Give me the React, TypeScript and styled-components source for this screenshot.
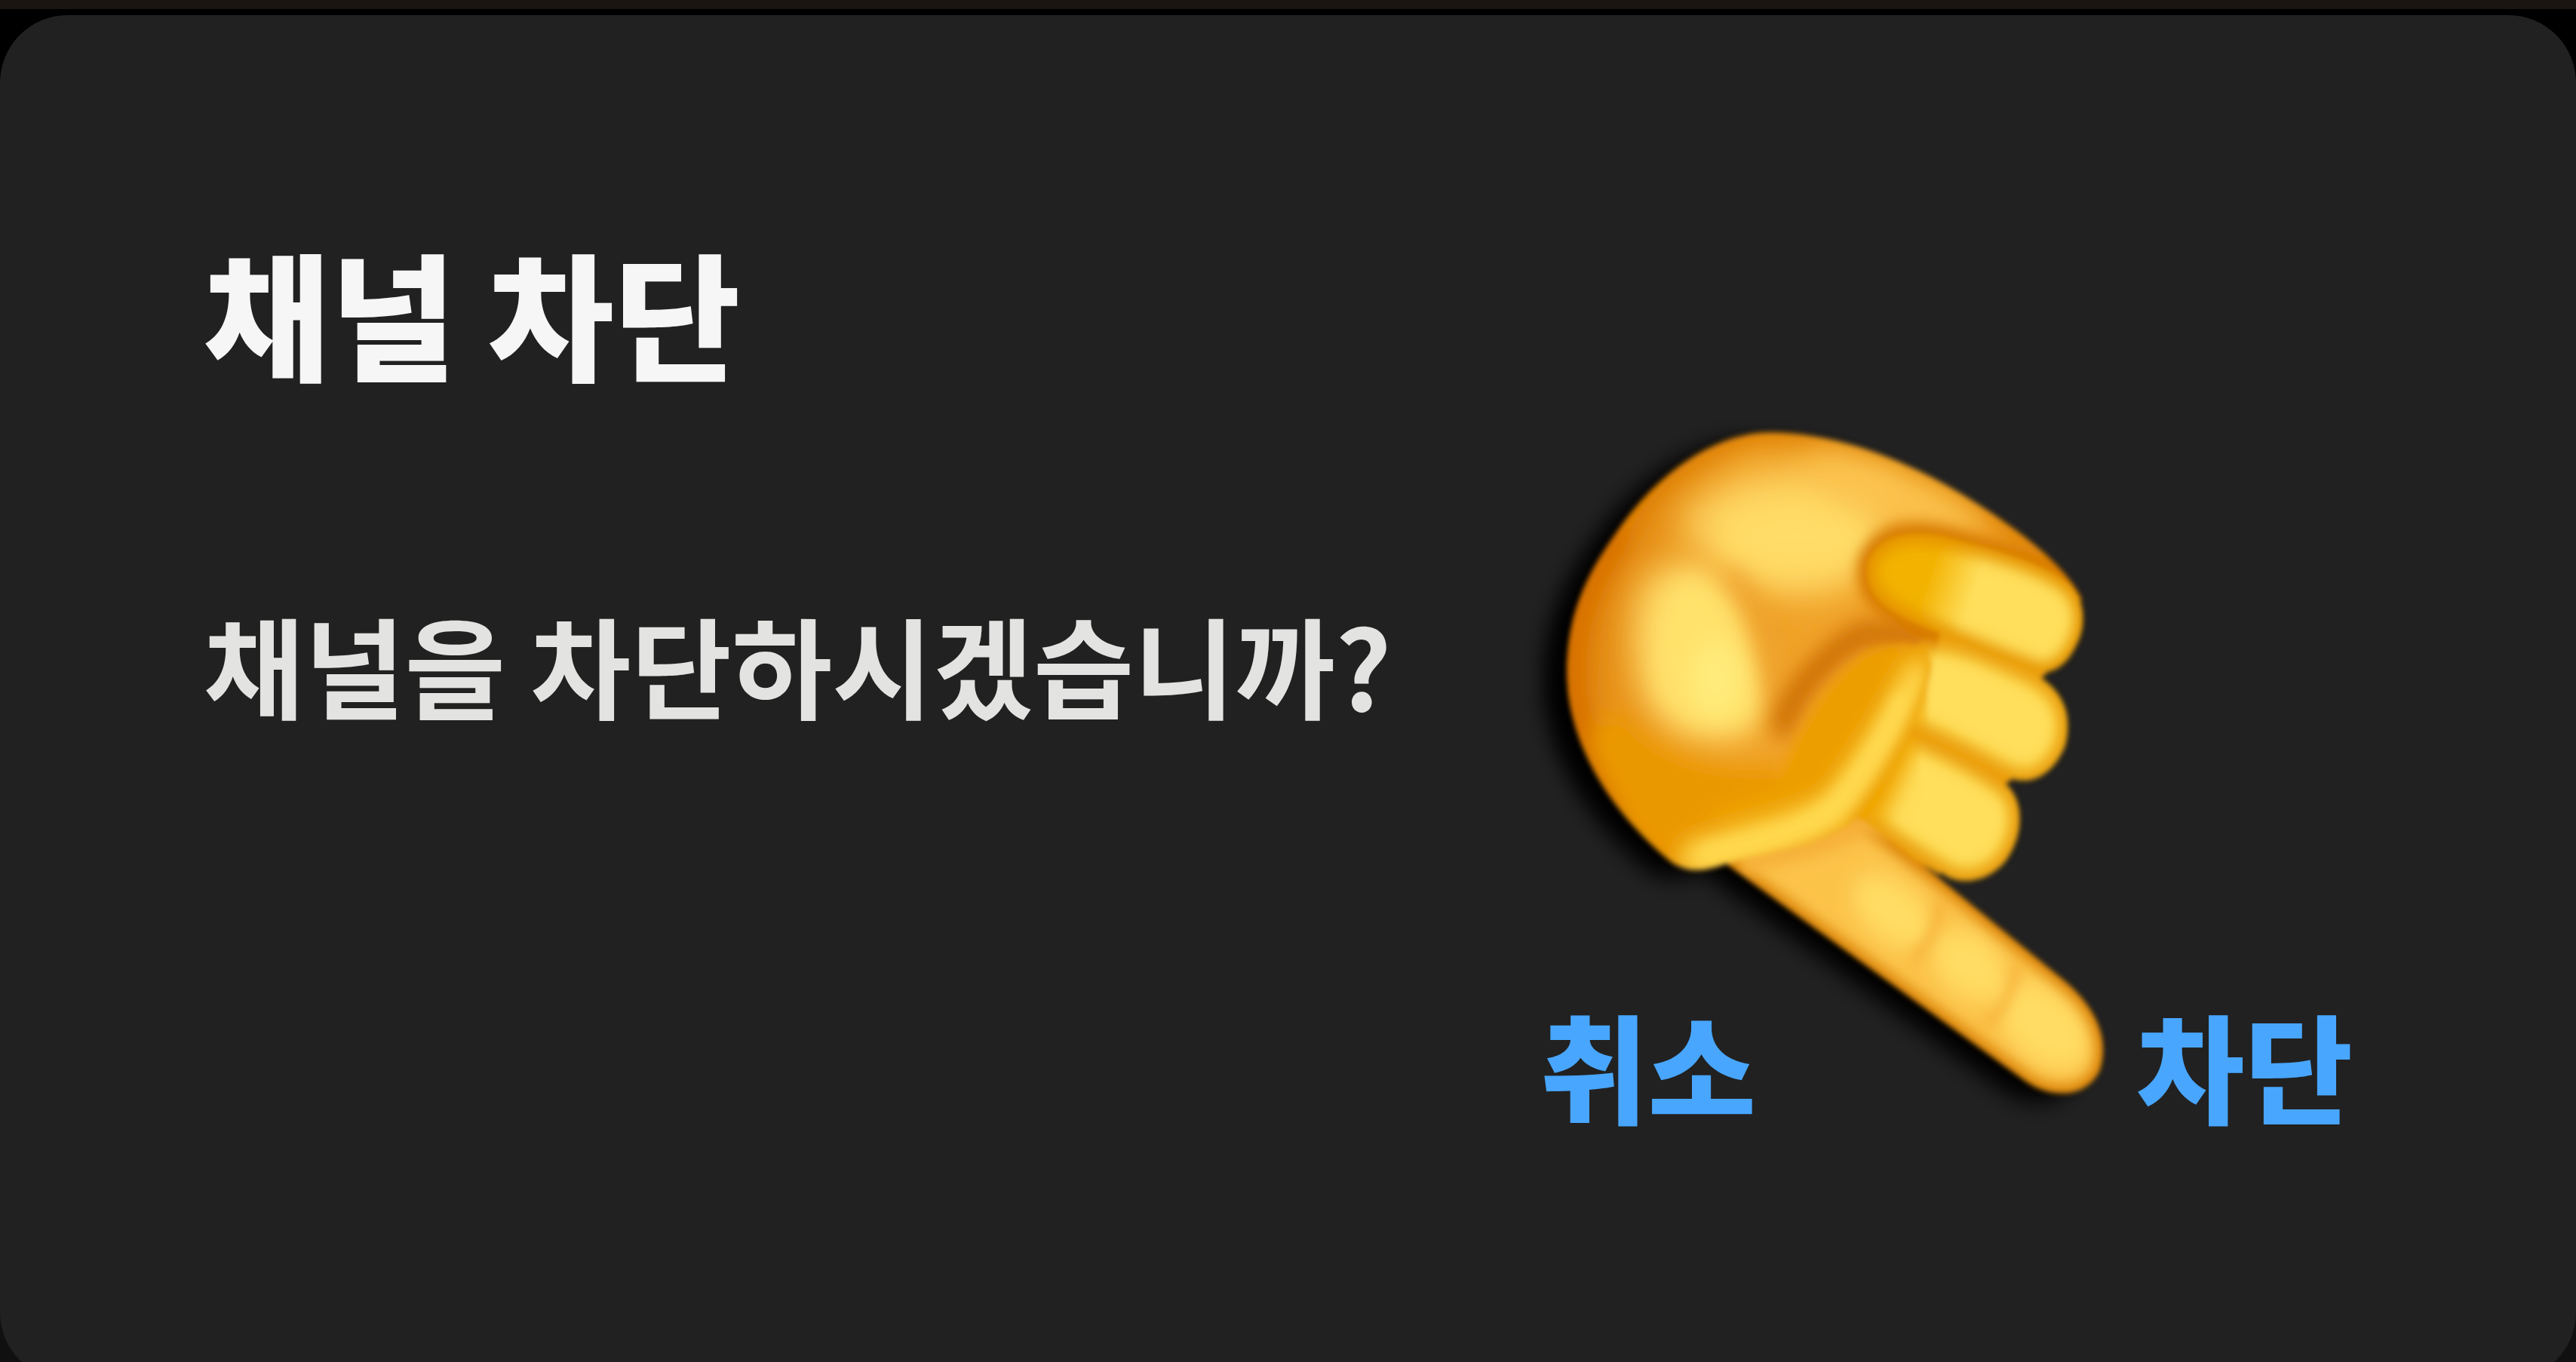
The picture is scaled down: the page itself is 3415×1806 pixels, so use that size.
import React from "react";
import styled, { createGlobalStyle } from "styled-components";

const GlobalStyle = createGlobalStyle`
  *, *::before, *::after { box-sizing: border-box; }
  body { margin: 0; background: #101010; }
`;

const Page = styled.main`
  display: flex;
  flex-direction: column;
  height: 100vh;
  overflow: hidden;
  border-top: 12px solid #1b1511;
  background: linear-gradient(#000 60%, #101010 90%);
  font-family: "Noto Sans CJK KR", "Noto Sans", sans-serif;
`;

const Dialog = styled.section`
  position: relative;
  flex: 1 0 auto;
  display: flex;
  flex-direction: column;
  margin: 8px 0 -24px;
  padding: 256px 296px 304px 270px;
  border-radius: 90px;
  background: #212121;
`;

const Title = styled.h1`
  margin: 0;
  color: #f6f6f6;
  font-size: 182px;
  font-weight: 900;
  line-height: 272px;
`;

const Message = styled.p`
  margin: 224px 0 0;
  color: #e3e3e1;
  font-size: 145px;
  font-weight: 700;
  line-height: 216px;
`;

const Actions = styled.div`
  display: flex;
  justify-content: flex-end;
  gap: 504px;
  margin-top: auto;
`;

const ActionButton = styled.button`
  padding: 0;
  border: 0;
  background: none;
  color: #48a6ff;
  font: inherit;
  font-size: 156px;
  font-weight: 900;
  line-height: 232px;
  cursor: pointer;
`;

const Hand = styled.svg`
  position: absolute;
  top: 500px;
  right: 575px;
  width: 860px;
  height: 960px;
  overflow: visible;
  pointer-events: none;
`;

const PALM =
  "M700 88C850 95 1000 150 1130 220C1260 290 1385 375 1422 450L1380 480L1220 400L1080 520L1060 590C1040 680 960 830 870 930C800 985 700 985 560 1022C510 1038 470 1042 430 1018C310 930 200 800 180 650C165 500 220 400 300 300C400 170 550 75 700 88Z";
const INDEX =
  "M560 1020L1290 1495C1350 1530 1430 1530 1465 1470C1495 1390 1440 1320 1380 1275L1060 1040L900 930L700 880Z";
const FIRST =
  "M905 370C930 310 1000 300 1080 312C1200 340 1320 365 1390 415C1440 460 1430 520 1400 562C1370 610 1320 615 1290 598C1200 570 1100 530 1020 500C950 470 895 440 905 370Z";
const SECOND =
  "M1030 540C1100 520 1200 565 1300 606C1380 645 1400 700 1382 765C1350 835 1290 855 1240 832C1150 790 1080 755 970 715Z";
const THIRD =
  "M980 730C1080 760 1180 810 1240 850C1285 890 1280 960 1240 1012C1200 1060 1130 1070 1090 1045C1020 1010 960 970 870 915Z";
const THUMB =
  "M430 1018C330 900 500 860 670 840C720 720 800 610 880 565C950 530 1050 530 1060 590C1050 680 960 840 870 930C800 985 700 985 560 1022C510 1038 470 1042 430 1018Z";
const KNUCKLES = "M900 440L1200 480L1340 606L1240 680L1330 700L1250 842L1100 900L1080 1045L850 930Z";

function PointingHand() {
  return (
    <Hand viewBox="0 0 1568 1568" preserveAspectRatio="none" role="img" aria-label="👇">
      <defs>
        <clipPath id="palm"><path d={PALM} /></clipPath>
        <clipPath id="index"><path d={INDEX} /></clipPath>
        <clipPath id="first"><path d={FIRST} /></clipPath>
        <clipPath id="second"><path d={SECOND} /></clipPath>
        <clipPath id="third"><path d={THIRD} /></clipPath>
        <clipPath id="thumb"><path d={THUMB} /></clipPath>
        <linearGradient id="palmFill" x1="0" y1="0" x2="1" y2="0.25">
          <stop offset="0" stopColor="#d87600" />
          <stop offset="0.35" stopColor="#efa026" />
          <stop offset="1" stopColor="#f5ab30" />
        </linearGradient>
        <linearGradient id="firstFill" gradientUnits="userSpaceOnUse" x1="1050" y1="395" x2="1160" y2="435">
          <stop offset="0" stopColor="#f3b200" />
          <stop offset="1" stopColor="#ffdf5c" />
        </linearGradient>
        <filter id="b6" x="-20%" y="-20%" width="140%" height="140%"><feGaussianBlur stdDeviation="6" /></filter>
        <filter id="b14" x="-50%" y="-50%" width="200%" height="200%"><feGaussianBlur stdDeviation="14" /></filter>
        <filter id="b24" x="-50%" y="-50%" width="200%" height="200%"><feGaussianBlur stdDeviation="24" /></filter>
        <filter id="b40" x="-50%" y="-50%" width="200%" height="200%"><feGaussianBlur stdDeviation="38" /></filter>
      </defs>

      <g transform="translate(-58 18)" filter="url(#b24)">
        <path d={PALM} />
        <path d={INDEX} />
      </g>

      <g filter="url(#b6)">
        <path d={KNUCKLES} fill="#eb9c0c" />

        <g clipPath="url(#index)">
          <path d={INDEX} fill="#fcc34a" />
          <g filter="url(#b24)" fill="#ffdc64">
            <ellipse cx="965" cy="1125" rx="110" ry="65" transform="rotate(34 965 1125)" />
            <ellipse cx="1150" cy="1240" rx="95" ry="70" transform="rotate(34 1150 1240)" />
            <ellipse cx="1330" cy="1370" rx="125" ry="80" transform="rotate(36 1330 1370)" />
          </g>
          <path d={INDEX} fill="none" stroke="#d87e00" strokeWidth="36" filter="url(#b14)" />
          <g fill="none" stroke="#f5ac34" strokeWidth="18" filter="url(#b14)">
            <path d="M1080 1100Q1070 1190 1010 1230" />
            <path d="M1265 1240Q1250 1330 1190 1370" />
          </g>
          <path d="M600 1020C720 990 830 980 890 930L960 940" fill="none" stroke="#f6b13a" strokeWidth="50" filter="url(#b14)" />
        </g>

        <g clipPath="url(#palm)">
          <path d={PALM} fill="url(#palmFill)" />
          <path d={PALM} fill="none" stroke="#dd7e00" strokeWidth="50" filter="url(#b24)" />
          <path
            d="M440 280C540 170 760 120 980 220C960 290 880 320 860 410C760 460 600 430 540 350C500 320 430 320 440 280Z"
            fill="#fccb58"
            filter="url(#b40)"
          />
          <ellipse cx="730" cy="315" rx="210" ry="95" fill="#ffdd68" filter="url(#b40)" />
          <ellipse cx="970" cy="225" rx="230" ry="55" transform="rotate(20 970 225)" fill="#fcc450" filter="url(#b40)" />
          <path
            d="M350 420C460 300 570 390 600 480C650 590 670 690 630 730C530 780 390 740 350 640C320 560 330 450 350 420Z"
            fill="#fdd05e"
            filter="url(#b40)"
          />
          <path
            d="M440 410C520 370 580 450 610 550C645 640 650 700 605 725C510 750 400 710 390 620C380 530 390 450 440 410Z"
            fill="#ffe26c"
            filter="url(#b24)"
          />
          <ellipse cx="535" cy="620" rx="60" ry="80" fill="#ffeb7a" filter="url(#b24)" />
          <path d="M560 390C650 440 680 560 690 680" fill="none" stroke="#eea02c" strokeWidth="30" filter="url(#b24)" />
          <path d="M300 290C210 400 165 500 180 650C200 760 240 830 310 910" fill="none" stroke="#d87200" strokeWidth="90" filter="url(#b24)" />
          <path d="M690 740C720 650 800 570 890 525L1060 520" fill="none" stroke="#c96800" strokeWidth="50" filter="url(#b24)" />
          <path d="M230 740C260 860 330 940 430 1040L760 960L690 810C570 830 400 800 300 690Z" fill="#ea9800" filter="url(#b24)" />
        </g>

        <g clipPath="url(#third)">
          <path d={THIRD} fill="#ffdf5c" />
          <path d={THIRD} fill="none" stroke="#eba008" strokeWidth="52" filter="url(#b14)" />
          <path d="M980 730L880 925" stroke="#f0a406" strokeWidth="110" filter="url(#b24)" />
        </g>
        <g clipPath="url(#second)">
          <path d={SECOND} fill="#ffdf5c" />
          <path d={SECOND} fill="none" stroke="#eca20a" strokeWidth="52" filter="url(#b14)" />
          <path d="M1030 560L990 715" stroke="#f0a406" strokeWidth="80" filter="url(#b24)" />
        </g>
        <g clipPath="url(#palm)">
          <path d={FIRST} fill="none" stroke="#d87c00" strokeWidth="50" filter="url(#b14)" />
        </g>
        <g clipPath="url(#first)">
          <path d={FIRST} fill="url(#firstFill)" />
          <path d={FIRST} fill="none" stroke="#e69606" strokeWidth="44" filter="url(#b14)" />
        </g>

        <g clipPath="url(#thumb)">
          <path
            d="M690 840C750 700 820 620 890 570C960 530 1070 530 1070 600C1050 700 960 840 870 940L640 1000L500 900Z"
            fill="#ec9e00"
            filter="url(#b14)"
          />
          <path
            d="M490 1010C640 965 780 950 840 890C920 800 980 700 1025 620"
            fill="none"
            stroke="#ffd448"
            strokeWidth="84"
            strokeLinecap="round"
            filter="url(#b24)"
          />
          <path
            d="M520 1000C650 970 780 945 840 880C900 810 950 740 985 670"
            fill="none"
            stroke="#ffda50"
            strokeWidth="40"
            strokeLinecap="round"
            filter="url(#b14)"
          />
          <path d="M1065 590C1045 680 960 835 870 935" fill="none" stroke="#e99c08" strokeWidth="16" filter="url(#b14)" />
        </g>
      </g>
    </Hand>
  );
}

export default function App() {
  return (
    <Page>
      <GlobalStyle />
      <Dialog role="dialog" aria-labelledby="title" aria-describedby="message">
        <Title id="title">채널 차단</Title>
        <Message id="message">채널을 차단하시겠습니까?</Message>
        <Actions>
          <ActionButton type="button">취소</ActionButton>
          <ActionButton type="button">차단</ActionButton>
        </Actions>
        <PointingHand />
      </Dialog>
    </Page>
  );
}
